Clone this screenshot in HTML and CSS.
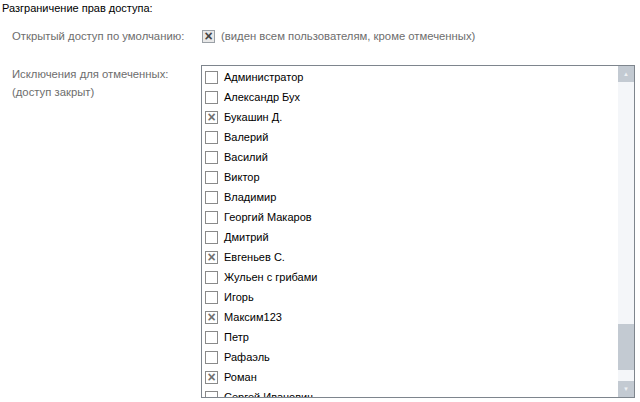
FILE: index.html
```html
<!DOCTYPE html>
<html lang="ru">
<head>
    <meta charset="UTF-8">
    <title>Разграничение прав доступа</title>
    <link rel="stylesheet" href="styles.css">
</head>
<body>
<div class="section-title">Разграничение прав доступа:</div>

<div class="form-row open-row">
    <div class="label">Открытый доступ по умолчанию:</div>
    <div class="value">
        <span class="check default-check checked"></span>
        <span class="hint">(виден всем пользователям, кроме отмеченных)</span>
    </div>
</div>

<div class="form-row list-row">
    <div class="label">Исключения для отмеченных:<br>(доступ закрыт)</div>
    <div class="listbox">
        <div class="items">
            <div class="item"><span class="check"></span>Администратор</div>
            <div class="item"><span class="check"></span>Александр Бух</div>
            <div class="item"><span class="check checked"></span>Букашин Д.</div>
            <div class="item"><span class="check"></span>Валерий</div>
            <div class="item"><span class="check"></span>Василий</div>
            <div class="item"><span class="check"></span>Виктор</div>
            <div class="item"><span class="check"></span>Владимир</div>
            <div class="item"><span class="check"></span>Георгий Макаров</div>
            <div class="item"><span class="check"></span>Дмитрий</div>
            <div class="item"><span class="check checked"></span>Евгеньев С.</div>
            <div class="item"><span class="check"></span>Жульен с грибами</div>
            <div class="item"><span class="check"></span>Игорь</div>
            <div class="item"><span class="check checked"></span>Максим123</div>
            <div class="item"><span class="check"></span>Петр</div>
            <div class="item"><span class="check"></span>Рафаэль</div>
            <div class="item"><span class="check checked"></span>Роман</div>
            <div class="item"><span class="check"></span>Сергей Иванович</div>
        </div>
        <div class="scrollbar">
            <div class="scroll-btn up">&#9650;</div>
            <div class="track">
                <div class="thumb"></div>
            </div>
            <div class="scroll-btn down">&#9660;</div>
        </div>
    </div>
</div>
</body>
</html>
```

FILE: styles.css
```css
body {
    margin: 0;
    padding: 0;
    font-family: "Liberation Sans", Arial, sans-serif;
    font-size: 11px;
    color: #000;
    background: #fff;
}
.section-title {
    padding: 1px 0 0 2px;
    height: 15px;
    line-height: 15px;
}
.form-row {
    display: grid;
    grid-template-columns: 190px 1fr;
    padding-left: 12px;
}
.open-row {
    margin-top: 11px;
}
.label {
    color: #6d6d6d;
    line-height: 18px;
    font-size: 11.3px;
}
.value {
    display: flex;
    align-items: center;
    height: 18px;
}
.hint {
    color: #6d6d6d;
    margin-left: 6px;
    font-size: 11.3px;
}
.list-row {
    margin-top: 20px;
}
.check {
    display: inline-block;
    box-sizing: border-box;
    width: 13px;
    height: 13px;
    border: 1px solid #8a8a8a;
    background: #fff;
    position: relative;
    flex: none;
}
.check.checked::after {
    content: "\00d7";
    position: absolute;
    left: 0;
    top: -3px;
    width: 11px;
    text-align: center;
    font-size: 14px;
    font-weight: bold;
    color: #707070;
}
.default-check {
    border-color: #9aa0a6;
    background: #e8e8e8;
}
.default-check.checked::after {
    color: #444;
}
.listbox {
    display: flex;
    width: 434px;
    height: 333px;
    box-sizing: border-box;
    border: 1px solid #7e858d;
    margin-left: -1px;
}
.items {
    flex: 1;
    overflow: hidden;
    padding: 1px 0 0 3px;
}
.item {
    display: flex;
    align-items: center;
    height: 20px;
    gap: 6px;
    white-space: nowrap;
}
.scrollbar {
    width: 16px;
    display: flex;
    flex-direction: column;
    background: #f4f6f9;
}
.scroll-btn {
    height: 16px;
    background: #c3cad2;
    color: #eef1f4;
    font-size: 6px;
    display: flex;
    align-items: center;
    justify-content: center;
}
.track {
    flex: 1;
    position: relative;
}
.thumb {
    position: absolute;
    left: 0;
    right: 0;
    top: 242px;
    height: 46px;
    background: #c3cad2;
}
```
